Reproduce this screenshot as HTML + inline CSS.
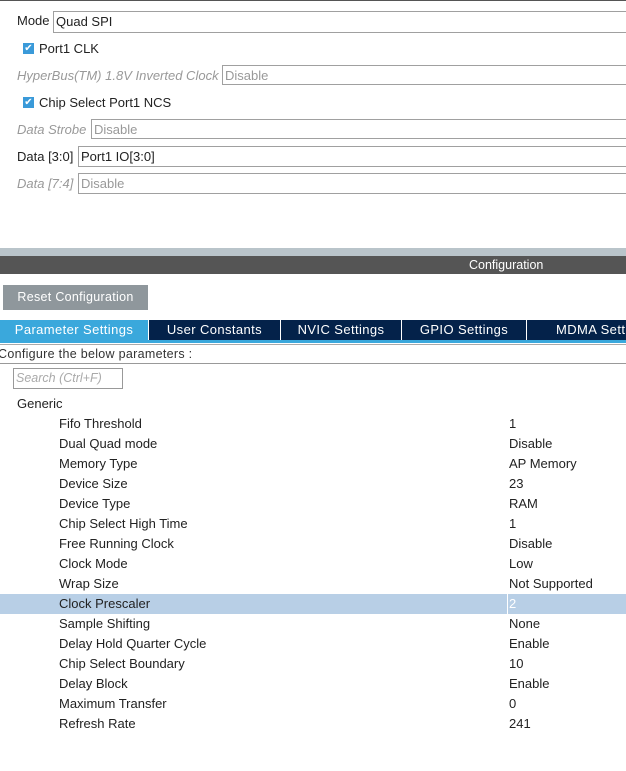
<!DOCTYPE html>
<html><head><style>
body{margin:0;width:626px;height:771px;overflow:hidden;background:#fff;font-family:"Liberation Sans",Arial,sans-serif;font-size:13px;color:#222;position:relative}
.a{position:absolute;white-space:nowrap}
.box{position:absolute;border:1px solid #a0a0a0;border-right:none;height:20px;right:0;line-height:20px;padding-left:2px;box-sizing:border-box}
.g{color:#999;font-style:italic}
.chk{position:absolute;width:11px;height:11px;background:#3a9ad9;color:#fff;font-size:10px;line-height:11px;text-align:center}
.row{position:absolute;left:0;right:0;height:20px;line-height:20px}
.row span{position:absolute}
.tab{position:absolute;top:320px;height:20px;line-height:20px;background:#04224a;color:#fff;text-align:center;font-size:13px;white-space:nowrap;overflow:hidden;letter-spacing:0.4px}
</style></head><body>
<div class="a" style="left:0;right:0;top:0;height:1px;background:#555"></div>
<div class="a" style="left:17px;top:13px">Mode</div><div class="box" style="left:53px;top:11px;height:22px;line-height:20px">Quad SPI</div>
<div class="chk" style="left:23px;top:43px">✔</div><div class="a" style="left:39px;top:41px">Port1 CLK</div>
<div class="a g" style="left:17px;top:68px">HyperBus(TM) 1.8V Inverted Clock</div><div class="box" style="left:222px;top:65px;color:#999">Disable</div>
<div class="chk" style="left:23px;top:97px">✔</div><div class="a" style="left:39px;top:95px">Chip Select Port1 NCS</div>
<div class="a g" style="left:17px;top:122px">Data Strobe</div><div class="box" style="left:91px;top:119px;color:#999">Disable</div>
<div class="a" style="left:17px;top:149px">Data [3:0]</div><div class="box" style="left:78px;top:146px;height:21px">Port1 IO[3:0]</div>
<div class="a g" style="left:17px;top:176px">Data [7:4]</div><div class="box" style="left:78px;top:173px;height:21px;color:#999">Disable</div>
<div class="a" style="left:0;right:0;top:248px;height:8px;background:#b9c4ca"></div>
<div class="a" style="left:0;right:0;top:256px;height:18px;background:#555"></div>
<div class="a" style="left:469px;top:258px;color:#fff;font-size:12.5px">Configuration</div>
<div class="a" style="left:3px;top:285px;width:145px;height:25px;background:#8f979c;color:#fff;line-height:25px;text-align:center;font-size:12.5px;letter-spacing:0.3px">Reset Configuration</div>
<div class="tab" style="left:0;width:148px;background:#3aa8dc">Parameter Settings</div>
<div class="tab" style="left:149px;width:131px">User Constants</div>
<div class="tab" style="left:281px;width:120px">NVIC Settings</div>
<div class="tab" style="left:402px;width:124px">GPIO Settings</div>
<div class="tab" style="left:527px;width:99px;text-align:left;padding-left:29px;box-sizing:border-box">MDMA Settings</div>
<div class="a" style="left:0;right:0;top:340px;height:3px;background:#3aa8dc"></div>
<div class="a" style="left:0;right:0;top:344px;height:1px;background:#aaa"></div>
<div class="a" style="left:-2px;top:347px;font-size:12.5px;color:#333;letter-spacing:0.3px">Configure the below parameters :</div>
<div class="a" style="left:0;right:0;top:363px;height:1px;background:#999"></div>
<div class="a" style="left:13px;top:368px;width:110px;height:21px;border:1px solid #999;box-sizing:border-box;color:#aaa;font-style:italic;line-height:19px;padding-left:2px;font-size:12.5px">Search (Ctrl+F)</div>
<div class="a" style="left:17px;top:396px">Generic</div>
<div class="row" style="top:594px;background:#b8cfe6"></div>
<div class="a" style="left:507px;top:594px;width:1px;height:20px;background:#fff"></div>
<div id="rows"></div>
<script>
var d=[["Fifo Threshold","1"],["Dual Quad mode","Disable"],["Memory Type","AP Memory"],["Device Size","23"],["Device Type","RAM"],["Chip Select High Time","1"],["Free Running Clock","Disable"],["Clock Mode","Low"],["Wrap Size","Not Supported"],["Clock Prescaler","2"],["Sample Shifting","None"],["Delay Hold Quarter Cycle","Enable"],["Chip Select Boundary","10"],["Delay Block","Enable"],["Maximum Transfer","0"],["Refresh Rate","241"]];
var h="";d.forEach(function(r,i){h+='<div class="row" style="top:'+(414+i*20)+'px"><span style="left:59px">'+r[0]+'</span><span style="left:509px;'+(i==9?'color:#fff':'')+'">'+r[1]+'</span></div>'});
document.getElementById("rows").innerHTML=h;
</script>
</body></html>
